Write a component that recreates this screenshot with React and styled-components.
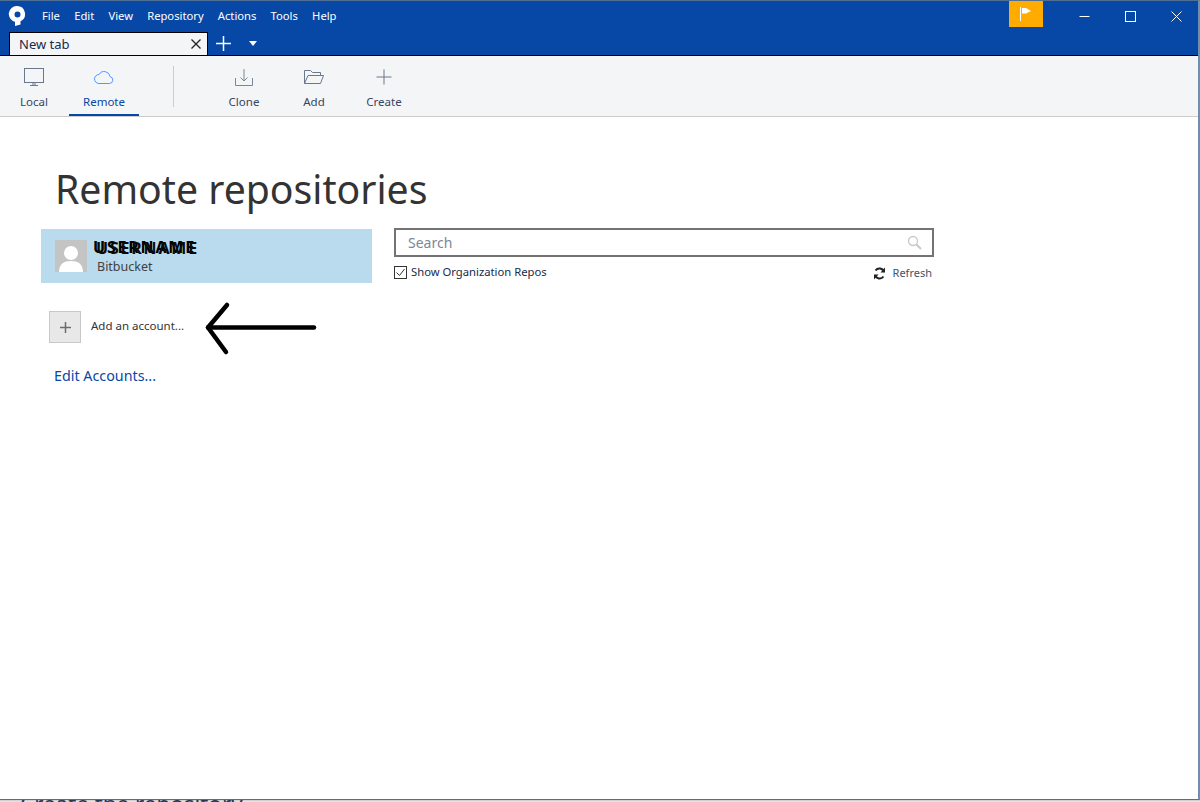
import React from "react";
import styled, { createGlobalStyle } from "styled-components";

const FONT = `"Noto Sans", "Open Sans", "Liberation Sans", sans-serif`;

const GlobalStyle = createGlobalStyle`
  html, body {
    margin: 0;
    padding: 0;
    height: 100%;
    background: #fff;
    overflow: hidden;
    font-family: ${FONT};
  }
`;

const Page = styled.div`
  width: 1200px;
  height: 802px;
  display: flex;
  flex-direction: column;
  overflow: hidden;
  background: #fff;
`;

const Win = styled.div`
  height: 800px;
  box-sizing: border-box;
  display: flex;
  flex-direction: column;
  border-top: 1px solid #4f6f94;
  border-right: 2px solid #6f8fb0;
  border-bottom: 1px solid #52708f;
  flex-shrink: 0;
`;

const BehindStrip = styled.div`
  height: 2px;
  overflow: hidden;
  background: linear-gradient(#c8c8c8, #ececec);
`;

const BehindText = styled.div`
  margin-top: -8px;
  padding-left: 20px;
  font-size: 22.4px;
  line-height: 24px;
  color: #253858;
  white-space: nowrap;
`;

const TitleBar = styled.div`
  background: #0747a6;
  height: 55px;
  box-sizing: border-box;
  display: flex;
  flex-direction: column;
  border-bottom: 1px solid #000;
  flex-shrink: 0;
`;

const TopRow = styled.div`
  height: 31px;
  display: flex;
  align-items: flex-start;
`;

const Logo = styled.svg`
  width: 18px;
  height: 20px;
  margin: 5px 0 0 8px;
`;

const Menu = styled.nav`
  display: flex;
  margin-left: 16px;
  gap: 14.2px;
  padding-top: 6px;
`;

const MenuItem = styled.span`
  color: #fff;
  font-size: 11.23px;
  line-height: 17px;
`;

const Spacer = styled.div`
  flex: 1;
`;

const FlagButton = styled.div`
  width: 34px;
  height: 26px;
  background: #ffab00;
  display: flex;
  align-items: center;
  justify-content: center;
`;

const WinControls = styled.div`
  display: flex;
  margin: 0 -1px 0 18px;
`;

const WinButton = styled.div`
  width: 46px;
  height: 30px;
  display: flex;
  align-items: center;
  justify-content: center;
`;

const TabRow = styled.div`
  height: 23px;
  display: flex;
  align-items: flex-end;
  padding-left: 9px;
`;

const Tab = styled.div`
  width: 199px;
  height: 23px;
  box-sizing: border-box;
  background: #f4f5f7;
  border: 1px solid #000;
  border-bottom: 0;
  display: flex;
  align-items: center;
  justify-content: space-between;
  padding: 0 6px 0 9px;
  font-size: 13px;
  color: #172b4d;
`;

const TabAction = styled.div`
  width: 30px;
  height: 23px;
  display: flex;
  align-items: center;
  justify-content: center;
`;

const Toolbar = styled.div`
  height: 61px;
  box-sizing: border-box;
  background: #f4f5f7;
  border-bottom: 1px solid #ccc;
  display: flex;
  flex-shrink: 0;
`;

const ToolGroup = styled.div`
  display: flex;
  margin-left: ${(p) => p.$offset || 0}px;
`;

const ToolItem = styled.div`
  width: 70px;
  height: 60px;
  box-sizing: border-box;
  display: flex;
  flex-direction: column;
  align-items: center;
  padding-top: 11px;
  border-bottom: ${(p) => (p.$active ? "2px solid #0747a6" : "0")};
  color: ${(p) => (p.$active ? "#0747a6" : "#344563")};
  font-size: 11.5px;
`;

const ToolIcon = styled.svg`
  width: 24px;
  height: 22px;
  display: block;
`;

const ToolLabel = styled.span`
  margin-top: 5px;
  line-height: 16px;
`;

const ToolDivider = styled.div`
  width: 1px;
  height: 41px;
  margin: 10px 35px 0 34px;
  background: #c9ccd1;
`;

const Content = styled.main`
  flex: 1;
  position: relative;
  padding: 44px 0 0 41px;
  background: #fff;
`;

const Title = styled.h1`
  margin: 0 0 0 14px;
  font-size: 39.2px;
  font-weight: 400;
  line-height: 56px;
  color: #333;
  white-space: nowrap;
`;

const Columns = styled.div`
  display: flex;
  gap: 22px;
  margin-top: 12px;
`;

const LeftColumn = styled.div`
  width: 331px;
  display: flex;
  flex-direction: column;
`;

const AccountRow = styled.div`
  height: 54px;
  background: #b9dbed;
  display: flex;
  align-items: center;
  padding-left: 14px;
  gap: 10px;
`;

const Avatar = styled.svg`
  width: 32px;
  height: 32px;
  display: block;
`;

const AccountInfo = styled.div`
  display: flex;
  flex-direction: column;
  padding-top: 3px;
`;

const NameStack = styled.div`
  position: relative;
  height: 23px;
  margin: -5px 0 0 -4px;
`;

const Name = styled.span`
  font-size: 16px;
  font-weight: 700;
  line-height: 16px;
  letter-spacing: 1.8px;
  color: #000;
  white-space: nowrap;
`;

const NameGhost = styled(Name)`
  position: absolute;
  left: 3px;
  top: 4px;
  color: #0b0b0b;
`;

const Provider = styled.span`
  font-size: 12.5px;
  line-height: 16px;
  color: #42403f;
`;

const AddRow = styled.div`
  display: flex;
  align-items: center;
  gap: 10px;
  margin: 28px 0 0 8px;
`;

const AddButton = styled.div`
  width: 32px;
  height: 32px;
  box-sizing: border-box;
  background: #e8e8e8;
  border: 1px solid #c8c8c8;
  display: flex;
  align-items: center;
  justify-content: center;
`;

const AddLabel = styled.span`
  font-size: 11.5px;
  line-height: 14px;
  margin-top: -2px;
  color: #333;
`;

const EditLink = styled.a`
  margin: 23px 0 0 13px;
  font-size: 14.3px;
  line-height: 20px;
  color: #0747a6;
  text-decoration: none;
`;

const RightColumn = styled.div`
  width: 540px;
  margin-top: -1px;
  display: flex;
  flex-direction: column;
`;

const SearchBox = styled.div`
  height: 29px;
  box-sizing: border-box;
  border: 2px solid #737373;
  display: flex;
  align-items: center;
  justify-content: space-between;
  padding: 0 10px 0 12px;
  font-size: 14px;
  color: #7a869a;
`;

const OptionsRow = styled.div`
  display: flex;
  justify-content: space-between;
  margin-top: 5px;
  font-size: 11.25px;
  color: #172b4d;
`;

const CheckLabel = styled.label`
  display: flex;
  align-items: center;
  gap: 4px;
  line-height: 18px;
`;

const CheckBox = styled.span`
  width: 13px;
  height: 13px;
  box-sizing: border-box;
  border: 1px solid #333;
  display: flex;
  align-items: center;
  justify-content: center;
`;

const RefreshButton = styled.div`
  display: flex;
  align-items: center;
  gap: 7px;
  margin: 2px 2px 0 0;
  font-size: 11px;
  line-height: 18px;
  color: #42526e;
`;

const AnnotationArrow = styled.svg`
  position: absolute;
  left: 200px;
  top: 180px;
  width: 120px;
  height: 60px;
`;

const menus = ["File", "Edit", "View", "Repository", "Actions", "Tools", "Help"];

export default function App() {
  return (
    <Page>
      <GlobalStyle />
      <Win>
        <TitleBar>
          <TopRow>
            <Logo viewBox="0 0 18 20">
              <path
                fillRule="evenodd"
                fill="#fff"
                d="M9 0a8 8 0 0 1 3.5 15.2V18.5L7 20v-4.2A8 8 0 0 1 9 0Zm.5 5.5a3 3 0 1 0 0 6 3 3 0 0 0 0-6Z"
              />
            </Logo>
            <Menu>
              {menus.map((m) => (
                <MenuItem key={m}>{m}</MenuItem>
              ))}
            </Menu>
            <Spacer />
            <FlagButton>
              <svg width="14" height="16" viewBox="0 0 14 16">
                <path d="M1.5 1v14" stroke="#fff" strokeWidth="1" />
                <path d="M3 2h4l5 3-5 2.5H3z" fill="#fff" />
              </svg>
            </FlagButton>
            <WinControls>
              <WinButton>
                <svg width="11" height="11" viewBox="0 0 11 11">
                  <path d="M0.5 5.5h10" stroke="#fff" strokeWidth="1" />
                </svg>
              </WinButton>
              <WinButton>
                <svg width="11" height="11" viewBox="0 0 11 11">
                  <rect x="0.5" y="0.5" width="10" height="10" fill="none" stroke="#fff" />
                </svg>
              </WinButton>
              <WinButton>
                <svg width="11" height="11" viewBox="0 0 11 11">
                  <path d="M0.5 0.5l10 10M10.5 0.5l-10 10" stroke="#fff" strokeWidth="1" />
                </svg>
              </WinButton>
            </WinControls>
          </TopRow>
          <TabRow>
            <Tab>
              New tab
              <svg width="10" height="10" viewBox="0 0 10 10">
                <path d="M0.5 0.5l9 9M9.5 0.5l-9 9" stroke="#222" strokeWidth="1.3" />
              </svg>
            </Tab>
            <TabAction>
              <svg width="15" height="15" viewBox="0 0 15 15">
                <path d="M7.5 0v15M0 7.5h15" stroke="#fff" strokeWidth="1.5" />
              </svg>
            </TabAction>
            <TabAction>
              <svg width="8" height="5" viewBox="0 0 8 5">
                <path d="M0 0h8L4 5z" fill="#fff" />
              </svg>
            </TabAction>
          </TabRow>
        </TitleBar>

        <Toolbar>
          <ToolGroup $offset={-1}>
            <ToolItem>
              <ToolIcon viewBox="0 0 24 22" fill="none" stroke="#6b778c">
                <rect x="2.5" y="1.5" width="19" height="14" />
                <path d="M8 18.5h8M11 16v2M13 16v2" />
              </ToolIcon>
              <ToolLabel>Local</ToolLabel>
            </ToolItem>
            <ToolItem $active>
              <ToolIcon viewBox="0 0 24 22" fill="none" stroke="#4c9aff">
                <path d="M7 16.5h10.5a3.5 3.5 0 0 0 .6-6.9A6 6 0 0 0 7 7.5a4.5 4.5 0 0 0 0 9Z" />
              </ToolIcon>
              <ToolLabel>Remote</ToolLabel>
            </ToolItem>
          </ToolGroup>
          <ToolDivider />
          <ToolGroup>
            <ToolItem>
              <ToolIcon viewBox="0 0 24 22" fill="none" stroke="#7a869a">
                <path d="M3.5 11v7.5h17V11" />
                <path d="M12 2v12M8.5 10.5 12 14l3.5-3.5" />
              </ToolIcon>
              <ToolLabel>Clone</ToolLabel>
            </ToolItem>
            <ToolItem>
              <ToolIcon viewBox="0 0 24 22" fill="none" stroke="#6b778c">
                <path d="M2.5 16.5v-13h6l2 2h8v3" />
                <path d="M2.5 16.5 6 8.5h15.5l-3 8z" />
              </ToolIcon>
              <ToolLabel>Add</ToolLabel>
            </ToolItem>
            <ToolItem>
              <ToolIcon viewBox="0 0 24 22" fill="none" stroke="#6b778c">
                <path d="M12 2.5v15M4.5 10h15" />
              </ToolIcon>
              <ToolLabel>Create</ToolLabel>
            </ToolItem>
          </ToolGroup>
        </Toolbar>

        <Content>
          <Title>Remote repositories</Title>
          <Columns>
            <LeftColumn>
              <AccountRow>
                <Avatar viewBox="0 0 32 32">
                  <rect width="32" height="32" fill="#c4c4c4" />
                  <circle cx="16" cy="13" r="7" fill="#fff" />
                  <path d="M4 32c0-8 5-11 12-11s12 3 12 11z" fill="#fff" />
                </Avatar>
                <AccountInfo>
                  <NameStack>
                    <Name>USERNAME</Name>
                    <NameGhost>USERNAME</NameGhost>
                  </NameStack>
                  <Provider>Bitbucket</Provider>
                </AccountInfo>
              </AccountRow>
              <AddRow>
                <AddButton>
                  <svg width="13" height="13" viewBox="0 0 13 13">
                    <path d="M6.5 1v11M1 6.5h11" stroke="#6b6b6b" strokeWidth="1.5" />
                  </svg>
                </AddButton>
                <AddLabel>Add an account...</AddLabel>
              </AddRow>
              <EditLink href="#">Edit Accounts...</EditLink>
            </LeftColumn>
            <RightColumn>
              <SearchBox>
                Search
                <svg width="15" height="15" viewBox="0 0 15 15" fill="none" stroke="#c8c8c8">
                  <circle cx="6" cy="6" r="4.5" strokeWidth="1.3" />
                  <path d="M9.5 9.5 14 14" strokeWidth="2" />
                </svg>
              </SearchBox>
              <OptionsRow>
                <CheckLabel>
                  <CheckBox>
                    <svg width="11" height="11" viewBox="0 0 11 11" fill="none">
                      <path d="M1.5 5.5 4.5 8.5 9.5 2" stroke="#333" />
                    </svg>
                  </CheckBox>
                  Show Organization Repos
                </CheckLabel>
                <RefreshButton>
                  <svg width="13" height="13" viewBox="0 0 13 13" fill="none" stroke="#222" strokeWidth="2">
                    <path d="M11 5a4.8 4.8 0 0 0-8.5-1.5" />
                    <path d="M2 8a4.8 4.8 0 0 0 8.5 1.5" />
                    <path d="M12 0.5v5H7.5z" fill="#222" stroke="none" />
                    <path d="M1 12.5v-5h4.5z" fill="#222" stroke="none" />
                  </svg>
                  Refresh
                </RefreshButton>
              </OptionsRow>
            </RightColumn>
          </Columns>
          <AnnotationArrow viewBox="0 0 120 60" fill="none" stroke="#000" strokeWidth="4.5" strokeLinecap="round" strokeLinejoin="round">
            <path d="M8 30.5h106" />
            <path d="M27 8 8 30.5 26 55" />
          </AnnotationArrow>
        </Content>
      </Win>
      <BehindStrip>
        <BehindText>Create the repository</BehindText>
      </BehindStrip>
    </Page>
  );
}
